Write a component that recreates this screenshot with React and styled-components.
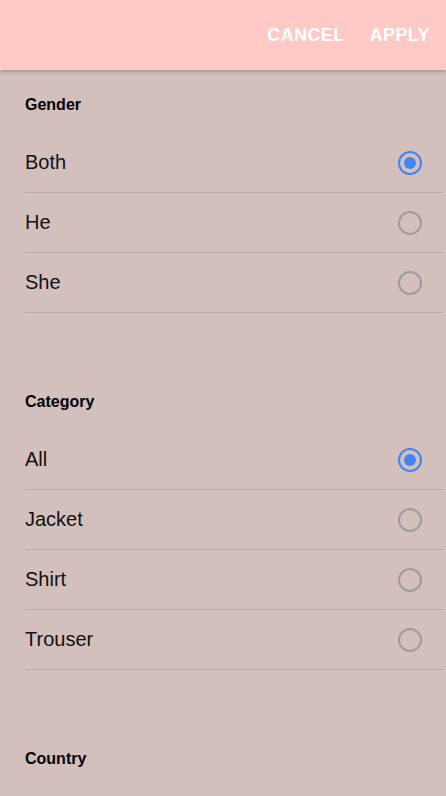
import React, { useState } from 'react';
import styled, { createGlobalStyle } from 'styled-components';

const GlobalStyle = createGlobalStyle`
  html, body {
    margin: 0;
    padding: 0;
    background: #d3c0bd;
    font-family: "Liberation Sans", Arial, sans-serif;
  }
`

const Page = styled.div`
  display: flex;
  flex-direction: column;
  height: 796px;
  overflow: hidden;
  background: #d3c0bd;
`

const Toolbar = styled.header`
  position: relative;
  z-index: 1;
  flex-shrink: 0;
  display: flex;
  justify-content: flex-end;
  align-items: center;
  gap: 25px;
  height: 70px;
  padding-right: 16px;
  background: #ffc9c6;
  box-shadow: 0 2px 4px rgba(0, 0, 0, 0.22);
`

const ToolbarButton = styled.button`
  border: none;
  background: none;
  padding: 0;
  color: #fff;
  font-family: inherit;
  font-size: 18px;
  font-weight: 700;
  letter-spacing: 0.4px;
  line-height: 20px;
  cursor: pointer;
`

const Section = styled.section`
  display: flex;
  flex-direction: column;
  flex-shrink: 0;
  margin-left: 25px;
  margin-right: 3px;
  margin-bottom: 54px;
`

const Heading = styled.h3`
  margin: 25px 0 18px;
  font-size: 16px;
  line-height: 20px;
  font-weight: 700;
  color: #000;
`

const Row = styled.label`
  display: flex;
  align-items: center;
  justify-content: space-between;
  height: 59px;
  padding-right: 21px;
  border-bottom: 1px solid #bba9a6;
  font-size: 20px;
  color: #111;
  cursor: pointer;
`

const Radio = styled.span`
  display: flex;
  align-items: center;
  justify-content: center;
  box-sizing: border-box;
  width: 24px;
  height: 24px;
  border-radius: 50%;
  border: 2px solid ${p => (p.checked ? '#4285f4' : '#9e9c9b')};

  &::after {
    content: '';
    width: 12px;
    height: 12px;
    border-radius: 50%;
    background: #4285f4;
    display: ${p => (p.checked ? 'block' : 'none')};
  }
`

const groups = [
  { title: 'Gender', options: ['Both', 'He', 'She'] },
  { title: 'Category', options: ['All', 'Jacket', 'Shirt', 'Trouser'] },
  { title: 'Country', options: [] },
]

const App = () => {
  const [picked, setPicked] = useState({ Gender: 'Both', Category: 'All' })

  return (
    <>
      <GlobalStyle />
      <Page>
        <Toolbar>
          <ToolbarButton>CANCEL</ToolbarButton>
          <ToolbarButton>APPLY</ToolbarButton>
        </Toolbar>
        {groups.map(g => (
          <Section key={g.title}>
            <Heading>{g.title}</Heading>
            {g.options.map(o => (
              <Row key={o} onClick={() => setPicked({ ...picked, [g.title]: o })}>
                {o}
                <Radio checked={picked[g.title] === o} />
              </Row>
            ))}
          </Section>
        ))}
      </Page>
    </>
  )
};

export default App;
